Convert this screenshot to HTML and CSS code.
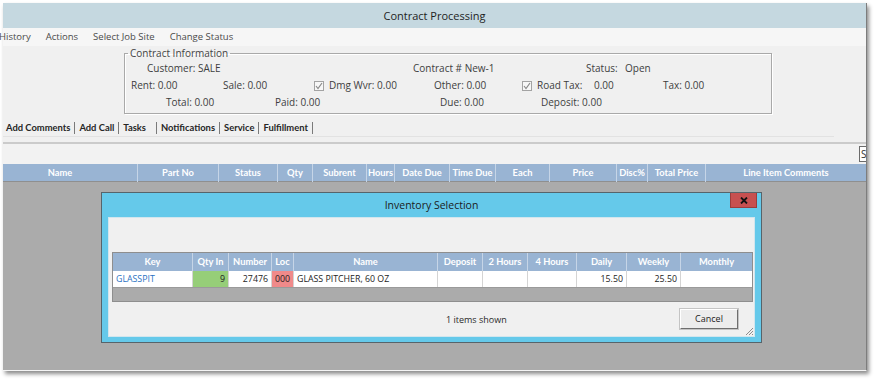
FILE: index.html
```html
<!DOCTYPE html>
<html>
<head>
<meta charset="utf-8">
<title>Contract Processing</title>
<link rel="stylesheet" href="styles.css">
</head>
<body>
<div class="window">
    <div class="title-bar">Contract Processing</div>

    <ul class="menu-bar">
        <li>History</li>
        <li>Actions</li>
        <li>Select Job Site</li>
        <li>Change Status</li>
    </ul>

    <div class="info-area">
        <fieldset class="contract-info">
            <legend>Contract Information</legend>
            <div class="info-row row-1">
                <span class="w-266">Customer: SALE</span>
                <span class="w-173">Contract # New-1</span>
                <span class="w-39">Status:</span>
                <span>Open</span>
            </div>
            <div class="info-row row-2">
                <span class="w-92">Rent: 0.00</span>
                <span class="w-91">Sale: 0.00</span>
                <span class="w-120"><i class="chk"><svg width="8" height="8" viewBox="0 0 8 8"><path d="M1 4 L3 6.5 L7 1" fill="none" stroke="#8a8a8a" stroke-width="1.2"/></svg></i>Dmg Wvr: 0.00</span>
                <span class="w-88">Other: 0.00</span>
                <span class="w-72"><i class="chk"><svg width="8" height="8" viewBox="0 0 8 8"><path d="M1 4 L3 6.5 L7 1" fill="none" stroke="#8a8a8a" stroke-width="1.2"/></svg></i>Road Tax:</span>
                <span class="w-69">0.00</span>
                <span>Tax: 0.00</span>
            </div>
            <div class="info-row row-3">
                <span class="w-109">Total: 0.00</span>
                <span class="w-165">Paid: 0.00</span>
                <span class="w-101">Due: 0.00</span>
                <span>Deposit: 0.00</span>
            </div>
        </fieldset>
    </div>

    <div class="tab-area">
        <ul class="tabs">
            <li>Add Comments</li>
            <li>Add Call</li>
            <li class="wide">Tasks</li>
            <li>Notifications</li>
            <li>Service</li>
            <li>Fulfillment</li>
        </ul>
    </div>

    <div class="toolbar">
        <span class="search">S</span>
    </div>

    <div class="grid-head">
        <span class="first">Name</span>
        <span>Part No</span>
        <span>Status</span>
        <span>Qty</span>
        <span>Subrent</span>
        <span>Hours</span>
        <span>Date Due</span>
        <span>Time Due</span>
        <span>Each</span>
        <span>Price</span>
        <span>Disc%</span>
        <span>Total Price</span>
        <span>Line Item Comments</span>
    </div>
    <div class="grid-body"></div>

    <!-- 弹出层 -->
    <div class="dialog">
        <div class="dialog-title">Inventory Selection</div>
        <span class="dialog-close"><svg width="8" height="7" viewBox="0 0 8 7"><path d="M1 0.5 L7 6.5 M7 0.5 L1 6.5" stroke="#111" stroke-width="1.8"/></svg></span>
        <div class="dialog-panel">
            <div class="inv-table">
                <div class="inv-row inv-head">
                    <span>Key</span>
                    <span>Qty In</span>
                    <span>Number</span>
                    <span>Loc</span>
                    <span>Name</span>
                    <span>Deposit</span>
                    <span>2 Hours</span>
                    <span>4 Hours</span>
                    <span>Daily</span>
                    <span>Weekly</span>
                    <span>Monthly</span>
                </div>
                <div class="inv-row inv-data">
                    <span class="key">GLASSPIT</span>
                    <span class="num qty-ok">9</span>
                    <span class="num">27476</span>
                    <span class="loc-bad">000</span>
                    <span>GLASS PITCHER, 60 OZ</span>
                    <span></span>
                    <span></span>
                    <span></span>
                    <span class="num">15.50</span>
                    <span class="num">25.50</span>
                    <span></span>
                </div>
            </div>
            <div class="dialog-foot">
                <span class="count">1 items shown</span>
                <span class="btn">Cancel</span>
            </div>
            <svg class="grip" width="9" height="9" viewBox="0 0 9 9"><path d="M8 1 L1 8 M8 4 L4 8 M8 7 L7 8" stroke="#8c8c8c" stroke-width="1"/></svg>
        </div>
    </div>
</div>
</body>
</html>
```

FILE: styles.css
```css
*{
    box-sizing: border-box;
}
html,body{
    margin: 0;
    padding: 0;
}
body{
    width: 876px;
    height: 380px;
    overflow: hidden;
    background: #fff;
    font-family: "Open Sans", "Noto Sans", sans-serif;
    font-size: 10px;
    color: #3e3e3e;
}
ul{
    margin: 0;
    padding: 0;
    list-style: none;
}

/* 主窗口 */
div.window{
    position: relative;
    margin: 3px 0 0 3px;
    width: 864px;
    height: 368px;
    display: flex;
    flex-direction: column;
    background: #ababab;
    border-right: 1px solid #7d7d7d;
    border-bottom: 1px solid #f4f4f4;
    box-shadow: 2px 3px 4px rgba(0, 0, 0, 0.45);
}
div.title-bar{
    flex: none;
    height: 25px;
    line-height: 26px;
    text-align: center;
    font-size: 11px;
    color: #1e1e1e;
    background: #c5d8e0;
}
ul.menu-bar{
    flex: none;
    height: 18px;
    display: flex;
    gap: 15px;
    padding-left: 0;
    line-height: 18px;
    font-size: 9.5px;
    color: #4a4a4a;
    background: #f6f6f6;
}
ul.menu-bar li:first-child{
    margin-left: -4px;
}

/* 合同信息 */
div.info-area{
    flex: none;
    height: 71px;
    padding-left: 121px;
    background: #f0f0f0;
}
fieldset.contract-info{
    margin: 0;
    padding: 0;
    width: 648px;
    height: 68px;
    border: 1px solid #a9a9a9;
    box-shadow: inset 1px 1px 0 #fff, 1px 1px 0 #fff;
}
fieldset.contract-info legend{
    margin-left: 3px;
    padding: 0 2px;
    line-height: 14px;
    color: #444;
}
div.info-row{
    display: flex;
    height: 17px;
    line-height: 17px;
    white-space: nowrap;
}
div.row-1{ padding-left: 22px; }
div.row-2{ padding-left: 6px; }
div.row-3{ padding-left: 41px; }
.w-39{ width: 39px; }
.w-69{ width: 69px; }
.w-72{ width: 72px; }
.w-88{ width: 88px; }
.w-91{ width: 91px; }
.w-92{ width: 92px; }
.w-101{ width: 101px; }
.w-109{ width: 109px; }
.w-120{ width: 120px; }
.w-165{ width: 165px; }
.w-173{ width: 173px; }
.w-266{ width: 266px; }
i.chk{
    display: inline-flex;
    align-items: center;
    justify-content: center;
    width: 10px;
    height: 10px;
    margin: 0 5px -1px 0;
    border: 1px solid #a3a3a3;
    background: #f7f7f7;
    vertical-align: -1px;
}

/* 选项卡 */
div.tab-area{
    flex: none;
    height: 25px;
    padding-top: 2px;
    background: #f0f0f0;
}
ul.tabs{
    display: flex;
    align-items: center;
    height: 18px;
    margin-right: 32px;
    border-bottom: 1px solid #e2e2e2;
    font-family: Lato, "Open Sans", sans-serif;
    font-weight: bold;
    font-size: 9.4px;
    color: #262626;
}
ul.tabs li{
    padding: 0 4px;
    line-height: 12px;
    border-right: 1px solid #7a7a7a;
}
ul.tabs li:first-child{
    padding-left: 3px;
}
ul.tabs li.wide{
    padding-right: 10px;
}

div.toolbar{
    flex: none;
    height: 22px;
    display: flex;
    align-items: center;
    justify-content: flex-end;
    border-top: 2px solid #cbcbcb;
    background: #f2f2f2;
}
span.search{
    width: 7px;
    height: 16px;
    overflow: hidden;
    padding-left: 1px;
    line-height: 14px;
    border: 1px solid #6b6b6b;
    border-right: 0;
    background: #fff;
    color: #333;
}

/* 列表表头 */
div.grid-head{
    flex: none;
    height: 18px;
    display: grid;
    grid-template-columns: 135px 81px 59px 35px 54px 28px 55px 46px 54px 67px 31px 58px 1fr;
    background: #99b4d3;
    border-bottom: 1px solid #8f8f8f;
    font-family: Lato, "Open Sans", sans-serif;
    font-weight: bold;
    font-size: 9.3px;
    color: #fff;
}
div.grid-head span{
    line-height: 18px;
    text-align: center;
    white-space: nowrap;
    border-right: 1px solid #c6d5e7;
}
div.grid-head span.first{
    padding-right: 20px;
}
div.grid-head span:last-child{
    border-right: 0;
}
div.grid-body{
    flex: 1;
    background: #ababab;
}

/* 库存选择弹出层 */
div.dialog{
    position: absolute;
    left: 98px;
    top: 189px;
    width: 661px;
    height: 151px;
    display: flex;
    flex-direction: column;
    padding: 0 6px 6px;
    background: #65c9ea;
    border: 1px solid #56646b;
}
div.dialog-title{
    flex: none;
    height: 24px;
    line-height: 25px;
    text-align: center;
    font-size: 10.5px;
    color: #1c1c1c;
}
span.dialog-close{
    position: absolute;
    top: 0;
    right: 4px;
    width: 27px;
    height: 15px;
    display: flex;
    align-items: center;
    justify-content: center;
    background: #c75050;
    border: 1px solid #9c3c3c;
    border-top: 0;
}
div.dialog-panel{
    position: relative;
    flex: 1;
    padding: 34px 0 0 3px;
    background: #f0f0f0;
    border: 1px solid #d2e6ee;
}
div.inv-table{
    width: 641px;
    height: 50px;
    background: #ababab;
    border: 1px solid #8e8e8e;
}
div.inv-row{
    display: grid;
    grid-template-columns: 80px 36px 43px 22px 144px 45px 45px 49px 50px 54px 1fr;
}
div.inv-head{
    height: 18px;
    background: #99b4d3;
    font-family: Lato, "Open Sans", sans-serif;
    font-weight: bold;
    font-size: 9.3px;
    color: #fff;
}
div.inv-head span{
    line-height: 18px;
    text-align: center;
    white-space: nowrap;
    border-right: 1px solid #c6d5e7;
}
div.inv-data{
    height: 17px;
    background: #fff;
    border-bottom: 1px solid #9a9a9a;
    font-size: 8.8px;
    color: #1c1c1c;
}
div.inv-data span{
    padding: 0 3px;
    line-height: 16px;
    white-space: nowrap;
    border-right: 1px solid #d4d4d4;
}
div.inv-row span:last-child{
    border-right: 0;
}
div.inv-data span.key{
    color: #2a71c2;
}
div.inv-data span.num{
    text-align: right;
}
div.inv-data span.qty-ok{
    background: #96ce78;
}
div.inv-data span.loc-bad{
    padding: 0;
    text-align: center;
    background: #f08a8a;
}
div.dialog-foot{
    height: 34px;
    display: flex;
    align-items: center;
    padding-left: 334px;
}
span.count{
    font-size: 9px;
    color: #2a2a2a;
}
span.btn{
    width: 58px;
    height: 20px;
    margin: 0 16px 0 auto;
    line-height: 18px;
    text-align: center;
    font-size: 9px;
    color: #222;
    background: #ececec;
    border: 1px solid #fff;
    border-right-color: #6e6e6e;
    border-bottom-color: #6e6e6e;
    box-shadow: 0 0 0 1px #c4c4c4;
}
svg.grip{
    position: absolute;
    right: 0;
    bottom: 0;
}
```
